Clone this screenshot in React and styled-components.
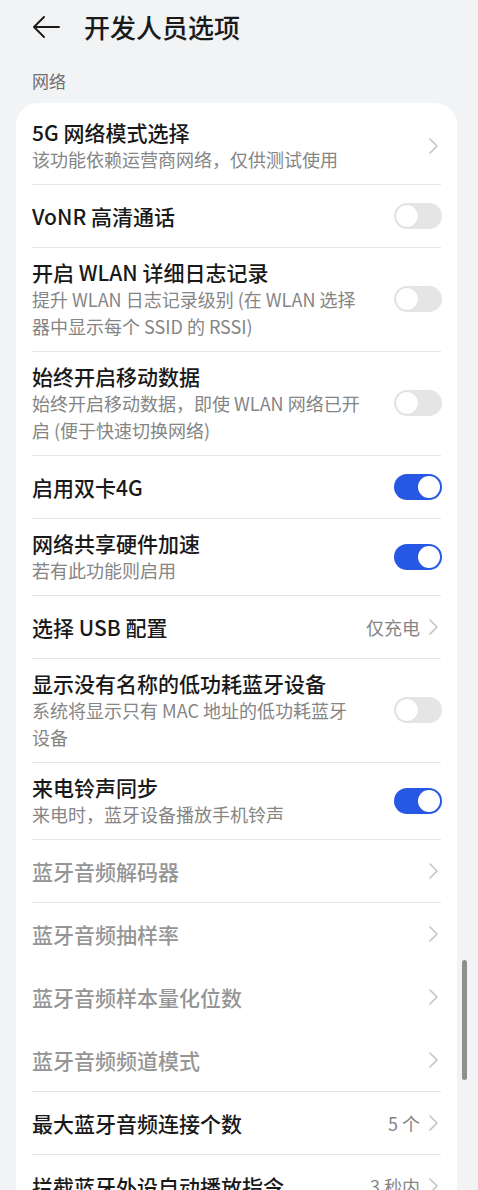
import React from 'react';
import styled, { createGlobalStyle } from 'styled-components';

const GlobalStyle = createGlobalStyle`
	html, body {
		margin: 0;
		padding: 0;
		background: #f1f3f5;
	}
	body {
		font-family: "Noto Sans CJK SC", "Noto Sans", sans-serif;
		color: #191919;
		overflow: hidden;
	}
`;

const Page = styled.div`
	width: 478px;
	min-height: 1190px;
	position: relative;
`;

const Header = styled.header`
	height: 54px;
	display: flex;
	align-items: center;
	padding-left: 32px;
	gap: 24px;
	h1 {
		margin: 0;
		font-size: 26px;
		font-weight: 500;
		line-height: 34px;
		color: #1a1a1a;
	}
`;

const SectionLabel = styled.div`
	padding: 15px 0 0 32px;
	font-size: 17px;
	line-height: 24px;
	color: #707070;
`;

const Card = styled.div`
	margin: 10px 0 0 16px;
	width: 441px;
	box-sizing: border-box;
	background: #fff;
	border-radius: 22px;
	padding: 5px 16px 0 16px;
`;

const Row = styled.div`
	display: flex;
	align-items: center;
	min-height: 63px;
	box-sizing: border-box;
	padding: 10px 0 11px;
	gap: 12px;
	border-bottom: 1px solid ${p => (p.$divider ? '#e6e6e6' : 'transparent')};
`;

const Texts = styled.div`
	flex: 1;
	min-width: 0;
`;

const Title = styled.div`
	font-size: 21px;
	line-height: 28px;
	font-weight: 500;
	color: ${p => (p.$disabled ? '#959595' : '#191919')};
`;

const Sub = styled.div`
	font-size: 18px;
	line-height: 27px;
	color: #858585;
`;

const Value = styled.span`
	font-size: 18px;
	color: #858585;
	white-space: nowrap;
`;

const Trailing = styled.div`
	display: flex;
	align-items: center;
	gap: 9px;
	padding-right: 3px;
`;

const Switch = styled.div`
	width: 48px;
	height: 26px;
	border-radius: 13px;
	box-sizing: border-box;
	padding: 2px;
	display: flex;
	justify-content: ${p => (p.$on ? 'flex-end' : 'flex-start')};
	background: ${p => (p.$on ? '#2658e3' : '#e5e5e5')};
	margin-right: -1px;
	span {
		width: 22px;
		height: 22px;
		border-radius: 50%;
		background: #fff;
		box-shadow: ${p => (p.$on ? 'none' : '0 0 0 0.5px rgba(0,0,0,0.06)')};
	}
`;

const ScrollThumb = styled.div`
	position: absolute;
	left: 462px;
	top: 960px;
	width: 5px;
	height: 120px;
	border-radius: 3px;
	background: #8f8f8f;
`;

const Chevron = () => (
	<svg width="9" height="16" viewBox="0 0 9 16">
		<path d="M1 1 L8 8 L1 15" fill="none" stroke="#c4c4c4" strokeWidth="1.6" strokeLinecap="round" strokeLinejoin="round" />
	</svg>
);

const BackArrow = () => (
	<svg width="28" height="22" viewBox="0 0 28 22">
		<path d="M27 11 H2 M12 1 L2 11 L12 21" fill="none" stroke="#1a1a1a" strokeWidth="1.9" strokeLinecap="round" strokeLinejoin="round" />
	</svg>
);

const items = [
	{ title: '5G 网络模式选择', sub: ['该功能依赖运营商网络，仅供测试使用'], type: 'link' },
	{ title: 'VoNR 高清通话', type: 'switch', on: false },
	{ title: '开启 WLAN 详细日志记录', sub: ['提升 WLAN 日志记录级别 (在 WLAN 选择', '器中显示每个 SSID 的 RSSI)'], type: 'switch', on: false },
	{ title: '始终开启移动数据', sub: ['始终开启移动数据，即使 WLAN 网络已开', '启 (便于快速切换网络)'], type: 'switch', on: false },
	{ title: '启用双卡4G', type: 'switch', on: true },
	{ title: '网络共享硬件加速', sub: ['若有此功能则启用'], type: 'switch', on: true },
	{ title: '选择 USB 配置', type: 'link', value: '仅充电' },
	{ title: '显示没有名称的低功耗蓝牙设备', sub: ['系统将显示只有 MAC 地址的低功耗蓝牙', '设备'], type: 'switch', on: false },
	{ title: '来电铃声同步', sub: ['来电时，蓝牙设备播放手机铃声'], type: 'switch', on: true },
	{ title: '蓝牙音频解码器', type: 'link', disabled: true },
	{ title: '蓝牙音频抽样率', type: 'link', disabled: true, noDivider: true },
	{ title: '蓝牙音频样本量化位数', type: 'link', disabled: true, noDivider: true },
	{ title: '蓝牙音频频道模式', type: 'link', disabled: true },
	{ title: '最大蓝牙音频连接个数', type: 'link', value: '5 个' },
	{ title: '拦截蓝牙外设自动播放指令', type: 'link', value: '3 秒内' },
	{ title: '蓝牙 AVRCP 版本', type: 'link', value: 'AVRCP 1.5' },
];

const App = () => {
	return (
		<Page>
			<GlobalStyle />
			<Header>
				<BackArrow />
				<h1>开发人员选项</h1>
			</Header>
			<SectionLabel>网络</SectionLabel>
			<Card>
				{items.map((it, i) => (
					<Row key={i} $divider={!it.noDivider && i < items.length - 1}>
						<Texts>
							<Title $disabled={it.disabled}>{it.title}</Title>
							{it.sub && it.sub.map((line, j) => <Sub key={j}>{line}</Sub>)}
						</Texts>
						{it.type === 'switch' ? (
							<Switch $on={it.on}><span /></Switch>
						) : (
							<Trailing>
								{it.value && <Value>{it.value}</Value>}
								<Chevron />
							</Trailing>
						)}
					</Row>
				))}
			</Card>
			<ScrollThumb />
		</Page>
	);
};

export default App;
